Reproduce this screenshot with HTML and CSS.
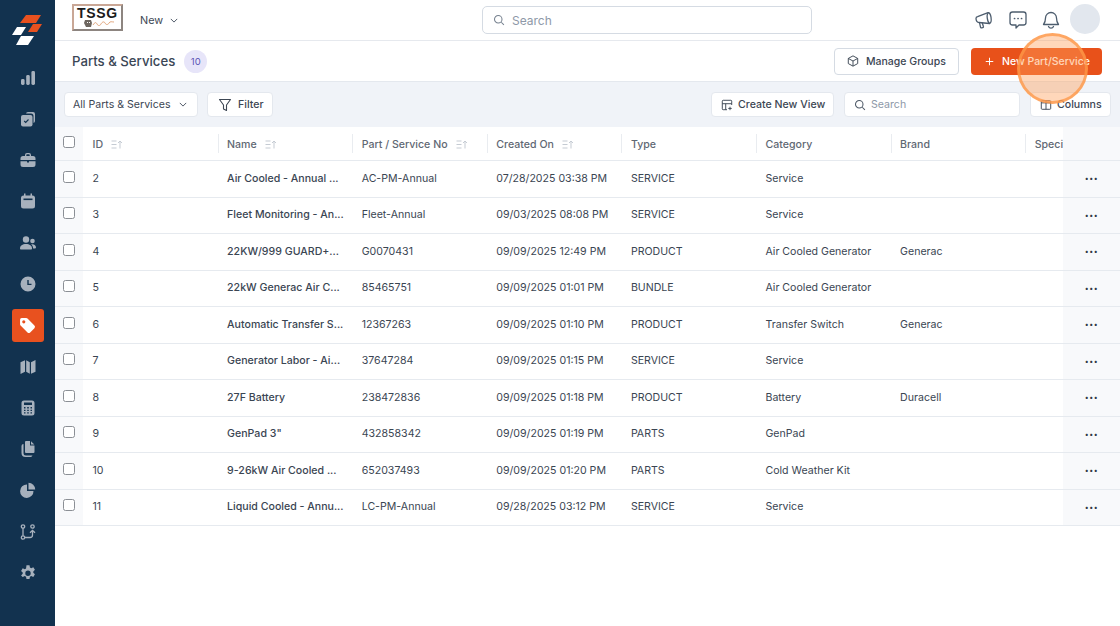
FILE: index.html
```html
<!DOCTYPE html>
<html lang="en">
<head>
<meta charset="utf-8">
<title>Parts &amp; Services</title>
<link rel="stylesheet" href="styles.css">
</head>
<body>
<div class="app">
  <aside class="sidebar">
    <svg class="brand" viewBox="0 0 30 31"><path fill="#e8511f" d="M14 1h15l-5 8H8z"/><path fill="#e8511f" d="M21 10h9l-5 8h-9z"/><path fill="#fff" d="M5 13h9l-5 8H0z"/><path fill="#fff" d="M9 22h13l-6 9H4z"/></svg>
    <nav class="nav">
      <a class="nav-item"><svg viewBox="0 0 16 16"><rect x="1" y="9" width="3.600" height="6" rx="1.400"/><rect x="6.200" y="5" width="3.600" height="10" rx="1.400"/><rect x="11.400" y="1" width="3.600" height="14" rx="1.400"/></svg></a>
      <a class="nav-item"><svg viewBox="0 0 16 16"><path d="M6 3a2 2 0 0 1 2-2h5a2 2 0 0 1 2 2v7a2 2 0 0 1-1.500 1.900V5a2.500 2.500 0 0 0-2.500-2.500H6z"/><rect x="1" y="4" width="11.500" height="11.500" rx="2"/><path d="M4.200 10l1.500 1.500 2.800-3" fill="none" stroke="#12324f" stroke-width="1.100"/></svg></a>
      <a class="nav-item"><svg viewBox="0 0 16 16"><path d="M5 4V3a2 2 0 0 1 2-2h2a2 2 0 0 1 2 2v1h2a2.500 2.500 0 0 1 2.500 2.500V8H.5V6.500A2.500 2.500 0 0 1 3 4zm1.300 0h3.400V3a.7.7 0 0 0-.7-.7H7a.7.7 0 0 0-.7.7z"/><path d="M.5 9.300h6.500V10.500h2V9.300h6.500V12.500A2.500 2.500 0 0 1 13 15H3a2.500 2.500 0 0 1-2.500-2.500z"/></svg></a>
      <a class="nav-item"><svg viewBox="0 0 16 16"><path d="M4 .5h1.500V2.500h5V.5H12V2.500h.5A2.500 2.500 0 0 1 15 5v8a2.500 2.500 0 0 1-2.500 2.500h-9A2.500 2.500 0 0 1 1 13V5a2.500 2.500 0 0 1 2.500-2.500H4z"/><rect x="3.500" y="5.500" width="9" height="1.600" fill="#12324f"/></svg></a>
      <a class="nav-item"><svg viewBox="0 0 16 16"><circle cx="6" cy="4.500" r="3.200"/><path d="M0 13.500C0 10.500 2.500 9 6 9s6 1.500 6 4.500c0 .6-.5 1-1 1H1c-.5 0-1-.4-1-1z"/><circle cx="12.500" cy="6" r="2.300"/><path d="M11 9.300c3-.6 5 .8 5 3.200 0 .5-.4.9-.9.9h-2C13 11.600 12.300 10.200 11 9.300z"/></svg></a>
      <a class="nav-item"><svg viewBox="0 0 16 16"><path fill-rule="evenodd" d="M8 .5a7.500 7.500 0 1 1 0 15 7.500 7.500 0 0 1 0-15zM7.300 4v5h4.200V7.700H8.700V4z"/></svg></a>
      <a class="nav-item active"><svg viewBox="0 0 16 16"><path fill="#fff" fill-rule="evenodd" d="M1 2.500A1.500 1.500 0 0 1 2.500 1h4.300c.5 0 .9.200 1.200.5l6.500 6.500a1.800 1.800 0 0 1 0 2.500l-4 4a1.800 1.800 0 0 1-2.500 0L1.500 8A1.700 1.700 0 0 1 1 6.800zM4.500 3a1.500 1.500 0 1 0 0 3 1.500 1.500 0 0 0 0-3z"/></svg></a>
      <a class="nav-item"><svg viewBox="0 0 16 16"><path d="M.5 3.300 5 1.200v11.600L.5 15zM6.200 1.200l3.600 2v11.600l-3.600-2zM11 3.200l4.500-2.200v11.800L11 14.800z"/></svg></a>
      <a class="nav-item"><svg viewBox="0 0 16 16"><path fill-rule="evenodd" d="M4 .5h8A2.500 2.500 0 0 1 14.500 3v10a2.500 2.500 0 0 1-2.500 2.500H4A2.500 2.500 0 0 1 1.500 13V3A2.500 2.500 0 0 1 4 .5zM4 2.500v2.500h8V2.500zM4 7v1.400h1.500V7zm3.200 0v1.400h1.600V7zm3.300 0v1.400H12V7zM4 9.700v1.400h1.500V9.700zm3.200 0v1.400h1.600V9.700zm3.300 0v1.400H12V9.700zM4 12.300v1.200h1.500v-1.200zm3.200 0v1.200h1.600v-1.200zm3.300 0v1.200H12v-1.200z"/></svg></a>
      <a class="nav-item"><svg viewBox="0 0 16 16"><path d="M5 1a1 1 0 0 1 1-1h4v4.500h4.500V11a1 1 0 0 1-1 1H6a1 1 0 0 1-1-1z"/><path d="M11 .3 14.300 3.500H11z"/><path d="M3.500 3v9a2.500 2.500 0 0 0 2.500 2.500h6.500A2 2 0 0 1 10.500 16H5.500A4 4 0 0 1 1.500 12V5A2 2 0 0 1 3.500 3z"/></svg></a>
      <a class="nav-item"><svg viewBox="0 0 16 16"><path d="M7 2.500V9h6.500A6.700 6.700 0 1 1 7 2.500z"/><path d="M8.500 .8a6.800 6.800 0 0 1 6.700 6.700H8.500z"/></svg></a>
      <a class="nav-item"><svg viewBox="0 0 16 16" class="line"><circle cx="3" cy="2.500" r="1.700"/><circle cx="3" cy="13.500" r="1.700"/><circle cx="12.500" cy="2.500" r="1.700"/><path d="M3 4.200v7.600M4.700 13.500H10a2.500 2.500 0 0 0 2.500-2.500V7M10 8.800l2.500-2.500 2.500 2.500"/></svg></a>
      <a class="nav-item"><svg viewBox="1 .5 14 14.800"><path fill-rule="evenodd" d="M6.600.5h2.800l.4 2 1.200.6 1.900-.8 1.500 2.400-1.500 1.400v1.300l1.500 1.400-1.500 2.400-1.900-.8-1.200.7-.4 2H6.600l-.4-2-1.200-.7-1.900.8L1.600 9.800l1.500-1.400V7.100L1.600 5.700l1.500-2.400 1.900.8 1.200-.6zM8 5.300a2.500 2.500 0 1 0 0 5 2.500 2.500 0 0 0 0-5z" transform="translate(0 .3)"/></svg></a>
    </nav>
  </aside>

  <main class="main">
    <header class="topbar">
      <div class="logo">
        <span class="logo-text">TSSG</span>
        <svg class="logo-art" viewBox="0 0 40 8"><path fill="#6d665f" d="M7 0h6l1 3-1 4H8L6 3z"/><path fill="#fff" d="M9 2h1v1H9zM11 2h1v1h-1z"/><path fill="none" stroke="#d9925f" stroke-width=".8" d="M15 5c2-3 3-3 4-1s3 2 4 0 3-3 4-1 3 2 4 0 3-1 5-1"/></svg>
      </div>
      <button class="new-menu">New
        <svg class="chev" viewBox="0 0 10 6"><path d="M1 1l4 4 4-4"/></svg>
      </button>
      <div class="top-search">
        <svg class="ico-search" viewBox="0 0 16 16"><circle cx="7" cy="7" r="5"/><path d="M11 11l3.500 3.500"/></svg>
        <span>Search</span>
      </div>
      <div class="top-icons">
        <svg class="top-ico" viewBox="0 0 20 20"><path d="M2 8.500c0-1 .7-1.700 1.600-1.900L14 2.700c1-.4 2.500 1 3 4.500s-.2 6-1.500 6.300L5 12.500c-1.800 0-3-1.900-3-4z"/><path d="M14.500 2.700c-1.200.7-1.600 3-1.200 5.600s1.200 4.600 2.300 5.200"/><path d="M5.500 12.600l1 4.600c.1.500.5.800 1 .7l1.300-.3c.5-.1.800-.6.600-1.100L8.300 13"/></svg>
        <svg class="top-ico" viewBox="0 0 20 20"><path d="M4.500 2h11A2.500 2.500 0 0 1 18 4.500v8a2.500 2.500 0 0 1-2.500 2.500H11l-3 3v-3H4.500A2.500 2.500 0 0 1 2 12.500v-8A2.500 2.500 0 0 1 4.500 2z"/><path class="dots" d="M6.500 8.500h.1M10 8.500h.1M13.500 8.500h.1"/></svg>
        <svg class="top-ico" viewBox="0 0 20 20"><path d="M10 2.500a5.500 5.500 0 0 0-5.500 5.500c0 3.500-.8 5-2 6.500h15c-1.200-1.500-2-3-2-6.500A5.500 5.500 0 0 0 10 2.500z"/><path d="M7.500 16.500c.4 1 1.300 1.700 2.500 1.700s2.100-.7 2.500-1.700"/></svg>
        <div class="avatar"></div>
      </div>
    </header>

    <section class="titlebar">
      <h1 class="title">Parts &amp; Services</h1>
      <span class="badge">10</span>
      <div class="title-actions">
        <button class="btn btn-outline">
          <svg class="btn-ico" viewBox="0 0 14 14"><path d="M7 1l5.500 3v6L7 13l-5.500-3V4zM1.500 4L7 7l5.500-3M7 7v6"/></svg>
          Manage Groups
        </button>
        <button class="btn btn-primary">
          <svg class="btn-ico plus" viewBox="0 0 12 12"><path d="M6 1v10M1 6h10"/></svg>
          New Part/Service
        </button>
      </div>
    </section>

    <section class="toolbar">
      <button class="tool tool-view">All Parts &amp; Services
        <svg class="chev" viewBox="0 0 10 6"><path d="M1 1l4 4 4-4"/></svg>
      </button>
      <button class="tool tool-filter">
        <svg class="btn-ico big" viewBox="0 0 14 14"><path d="M1.500 1.500h11L8.500 7v5.500l-3-1.500V7z"/></svg>
        Filter
      </button>
      <div class="tool-right">
        <button class="tool tool-create">
          <svg class="btn-ico" viewBox="0 0 14 14"><path d="M7 12.500H2.500a1 1 0 0 1-1-1v-9a1 1 0 0 1 1-1h9a1 1 0 0 1 1 1V7M1.500 5.500h11M5.500 5.500v7M10.500 9v4M8.500 11h4"/></svg>
          Create New View
        </button>
        <div class="tool tool-search">
          <svg class="ico-search small" viewBox="0 0 16 16"><circle cx="7" cy="7" r="5"/><path d="M11 11l3.500 3.500"/></svg>
          <span>Search</span>
        </div>
        <button class="tool tool-columns">
          <svg class="btn-ico" viewBox="0 0 14 14"><rect x="1.500" y="2" width="11" height="10" rx="1"/><path d="M7 2v10M1.500 4.500h11"/></svg>
          Columns
        </button>
      </div>
    </section>

    <section class="table">
      <div class="row head">
        <div class="cell check"><span class="box"></span></div>
        <div class="cell">ID <svg class="sort" viewBox="0 0 12 9"><path d="M.5 1h5M.5 4.500h5M.5 8h5M9 8.500V1M7 3l2-2 2 2"/></svg></div>
        <div class="cell sep">Name <svg class="sort" viewBox="0 0 12 9"><path d="M.5 1h5M.5 4.500h5M.5 8h5M9 8.500V1M7 3l2-2 2 2"/></svg></div>
        <div class="cell sep">Part / Service No <svg class="sort" viewBox="0 0 12 9"><path d="M.5 1h5M.5 4.500h5M.5 8h5M9 8.500V1M7 3l2-2 2 2"/></svg></div>
        <div class="cell sep">Created On <svg class="sort" viewBox="0 0 12 9"><path d="M.5 1h5M.5 4.500h5M.5 8h5M9 8.500V1M7 3l2-2 2 2"/></svg></div>
        <div class="cell sep">Type</div>
        <div class="cell sep">Category</div>
        <div class="cell sep">Brand</div>
        <div class="cell sep clip">Specifications</div>
        <div class="cell actions"></div>
      </div>
      <div class="row"><div class="cell check"><span class="box"></span></div><div class="cell">2</div><div class="cell name">Air Cooled - Annual ...</div><div class="cell">AC-PM-Annual</div><div class="cell">07/28/2025 03:38 PM</div><div class="cell">SERVICE</div><div class="cell">Service</div><div class="cell"></div><div class="cell clip"></div><div class="cell actions">•••</div></div>
      <div class="row"><div class="cell check"><span class="box"></span></div><div class="cell">3</div><div class="cell name">Fleet Monitoring - An...</div><div class="cell">Fleet-Annual</div><div class="cell">09/03/2025 08:08 PM</div><div class="cell">SERVICE</div><div class="cell">Service</div><div class="cell"></div><div class="cell clip"></div><div class="cell actions">•••</div></div>
      <div class="row"><div class="cell check"><span class="box"></span></div><div class="cell">4</div><div class="cell name">22KW/999 GUARD+...</div><div class="cell">G0070431</div><div class="cell">09/09/2025 12:49 PM</div><div class="cell">PRODUCT</div><div class="cell">Air Cooled Generator</div><div class="cell">Generac</div><div class="cell clip"></div><div class="cell actions">•••</div></div>
      <div class="row"><div class="cell check"><span class="box"></span></div><div class="cell">5</div><div class="cell name">22kW Generac Air C...</div><div class="cell">85465751</div><div class="cell">09/09/2025 01:01 PM</div><div class="cell">BUNDLE</div><div class="cell">Air Cooled Generator</div><div class="cell"></div><div class="cell clip"></div><div class="cell actions">•••</div></div>
      <div class="row"><div class="cell check"><span class="box"></span></div><div class="cell">6</div><div class="cell name">Automatic Transfer S...</div><div class="cell">12367263</div><div class="cell">09/09/2025 01:10 PM</div><div class="cell">PRODUCT</div><div class="cell">Transfer Switch</div><div class="cell">Generac</div><div class="cell clip"></div><div class="cell actions">•••</div></div>
      <div class="row"><div class="cell check"><span class="box"></span></div><div class="cell">7</div><div class="cell name">Generator Labor - Ai...</div><div class="cell">37647284</div><div class="cell">09/09/2025 01:15 PM</div><div class="cell">SERVICE</div><div class="cell">Service</div><div class="cell"></div><div class="cell clip"></div><div class="cell actions">•••</div></div>
      <div class="row"><div class="cell check"><span class="box"></span></div><div class="cell">8</div><div class="cell name">27F Battery</div><div class="cell">238472836</div><div class="cell">09/09/2025 01:18 PM</div><div class="cell">PRODUCT</div><div class="cell">Battery</div><div class="cell">Duracell</div><div class="cell clip"></div><div class="cell actions">•••</div></div>
      <div class="row"><div class="cell check"><span class="box"></span></div><div class="cell">9</div><div class="cell name">GenPad 3"</div><div class="cell">432858342</div><div class="cell">09/09/2025 01:19 PM</div><div class="cell">PARTS</div><div class="cell">GenPad</div><div class="cell"></div><div class="cell clip"></div><div class="cell actions">•••</div></div>
      <div class="row"><div class="cell check"><span class="box"></span></div><div class="cell">10</div><div class="cell name">9-26kW Air Cooled ...</div><div class="cell">652037493</div><div class="cell">09/09/2025 01:20 PM</div><div class="cell">PARTS</div><div class="cell">Cold Weather Kit</div><div class="cell"></div><div class="cell clip"></div><div class="cell actions">•••</div></div>
      <div class="row"><div class="cell check"><span class="box"></span></div><div class="cell">11</div><div class="cell name">Liquid Cooled - Annu...</div><div class="cell">LC-PM-Annual</div><div class="cell">09/28/2025 03:12 PM</div><div class="cell">SERVICE</div><div class="cell">Service</div><div class="cell"></div><div class="cell clip"></div><div class="cell actions">•••</div></div>
    </section>
  </main>
</div>
<div class="spotlight"></div>
</body>
</html>
```
FILE: styles.css
```css
* { box-sizing: border-box; }
html, body { margin: 0; height: 100%; overflow: hidden; }
body { font-family: Inter, "Liberation Sans", sans-serif; font-size: 10.6px; color: #3a4552; background: #fff; }
button { font: inherit; color: inherit; background: none; border: 0; padding: 0; }

.app { display: flex; width: 1120px; height: 626px; }

.sidebar { width: 55px; flex: none; background: #12324f; display: flex; flex-direction: column; align-items: center; padding-top: 14px; }
.brand { width: 30px; height: 31px; display: block; margin-bottom: 16px; margin-left: -1px; }
.nav { display: flex; flex-direction: column; gap: 8.3px; align-items: center; }
.nav-item { width: 32px; height: 33px; border-radius: 3px; display: flex; align-items: center; justify-content: center; }
.nav-item svg { width: 16px; height: 16px; fill: #a7b1bd; }
.nav-item svg.line { fill: none; stroke: #a7b1bd; stroke-width: 1.3; }
.nav-item.active { background: #e8511f; }
.nav-item.active svg { width: 17px; height: 17px; }

.main { flex: 1; min-width: 0; display: flex; flex-direction: column; }

.topbar { height: 41px; flex: none; display: flex; align-items: center; border-bottom: 1px solid #e6e9ee; padding-left: 17px; position: relative; }
.logo { width: 51px; height: 27px; margin-top: -5px; border: 2px solid #c9a796; border-right-color: #8d8580; border-bottom-color: #8d8580; background: #fff; display: flex; flex-direction: column; align-items: center; overflow: hidden; }
.logo-text { font-family: "Liberation Sans", sans-serif; font-weight: 700; font-size: 14px; line-height: 14px; letter-spacing: .7px; color: #1b1b1b; }
.logo-art { width: 40px; height: 8px; display: block; }
.new-menu { margin-left: 17px; display: flex; align-items: center; gap: 7px; font-size: 10.8px; color: #3c4653; }
.chev { width: 8px; height: 5px; fill: none; stroke: #4a5563; stroke-width: 1.2; }
.top-search { position: absolute; left: 427px; top: 6px; width: 330px; height: 28px; border: 1px solid #d5dbe3; border-radius: 5px; display: flex; align-items: center; padding-left: 10px; gap: 7px; color: #8e99a8; font-size: 12px; }
.ico-search { width: 12px; height: 12px; fill: none; stroke: #76818f; stroke-width: 1.4; }
.ico-search.small { stroke: #4d5866; }
.top-icons { margin-left: auto; display: flex; align-items: center; margin-right: 20px; gap: 13.500px; }
.top-ico { width: 20px; height: 20px; fill: none; stroke: #4d5d6e; stroke-width: 1.3; stroke-linejoin: round; stroke-linecap: round; }
.top-ico .dots { stroke-width: 1.7; }
.avatar { width: 30px; height: 30px; border-radius: 50%; background: #e2e7ee; margin-left: -4.500px; margin-top: -3px; }

.titlebar { height: 41px; flex: none; display: flex; align-items: center; padding: 0 18px 0 17px; border-bottom: 1px solid #e4e8ee; }
.title { margin: 0; font-size: 13.2px; font-weight: 500; color: #3a4655; }
.badge { margin-left: 9px; width: 23px; height: 23px; border-radius: 50%; background: #e7e5f9; color: #5a55b5; font-size: 9.5px; display: flex; align-items: center; justify-content: center; }
.title-actions { margin-left: auto; display: flex; gap: 12px; }
.btn { height: 27px; border-radius: 4px; display: flex; align-items: center; font-size: 10.5px; gap: 7px; font-weight: 500; }
.btn-outline { width: 125px; border: 1px solid #d5dbe3; color: #3c4653; background: #fff; padding-left: 12px; }
.btn-primary { width: 131px; background: #e8511a; color: #fff; gap: 8px; padding-left: 14px; }
.btn-ico { width: 12px; height: 12px; fill: none; stroke: #3c4653; stroke-width: 1.1; stroke-linejoin: round; flex: none; }
.btn-ico.big { width: 14px; height: 14px; }
.btn-ico.plus { width: 9px; height: 9px; stroke: #fff; stroke-width: 1.3; }

.toolbar { height: 45px; flex: none; display: flex; align-items: center; background: #f0f3f8; padding: 0 9px; gap: 9px; }
.tool { height: 25px; background: #fff; border: 1px solid #e4e8ee; border-radius: 4px; display: flex; align-items: center; font-size: 10.6px; gap: 5px; color: #3c4653; font-weight: 500; padding-left: 9px; }
.tool-view { width: 134px; gap: 8px; font-weight: 400; padding-left: 8px; }
.tool-filter { width: 66px; padding-left: 10px; gap: 6px; }
.tool-right { margin-left: auto; display: flex; gap: 10px; }
.tool-create { width: 123px; }
.tool-search { width: 176px; color: #8e99a8; font-weight: 400; padding-left: 9px; }
.tool-columns { width: 81px; }

.table { flex: none; }
.row { display: grid; grid-template-columns: 28px repeat(7, 134.600px) 37.800px 57px; height: 36.500px; border-bottom: 1px solid #e6eaef; align-items: center; }
.row.head { height: 34px; color: #5f6873; }
.cell { padding-left: 9.500px; white-space: nowrap; height: 100%; display: flex; align-items: center; min-width: 0; gap: 8px; padding-bottom: 1px; }
.name { font-weight: 500; }
.head .cell { position: relative; font-weight: 500; padding-bottom: 0; padding-top: 1px; }
.sep::before { content: ""; position: absolute; left: 0; top: 7px; bottom: 7px; width: 1px; background: #e9ecf0; }
.clip { overflow: hidden; }
.row .check { background: #f8f9fb; padding-left: 8px; padding-top: 0; padding-bottom: 4px; }
.box { width: 12px; height: 12px; border: 1.200px solid #8b8f95; border-radius: 2.500px; background: #fff; }
.actions { background: #f8f9fb; justify-content: center; padding: 0; font-size: 7px; letter-spacing: .6px; color: #2e3945; }
.sort { width: 12px; height: 9px; fill: none; stroke: #c5cbd3; stroke-width: 1; }

.spotlight { position: absolute; left: 1017px; top: 33px; width: 71px; height: 71px; border-radius: 50%; background: rgba(255, 160, 90, .42); border: 3px solid rgba(253, 150, 70, .75); }
```
